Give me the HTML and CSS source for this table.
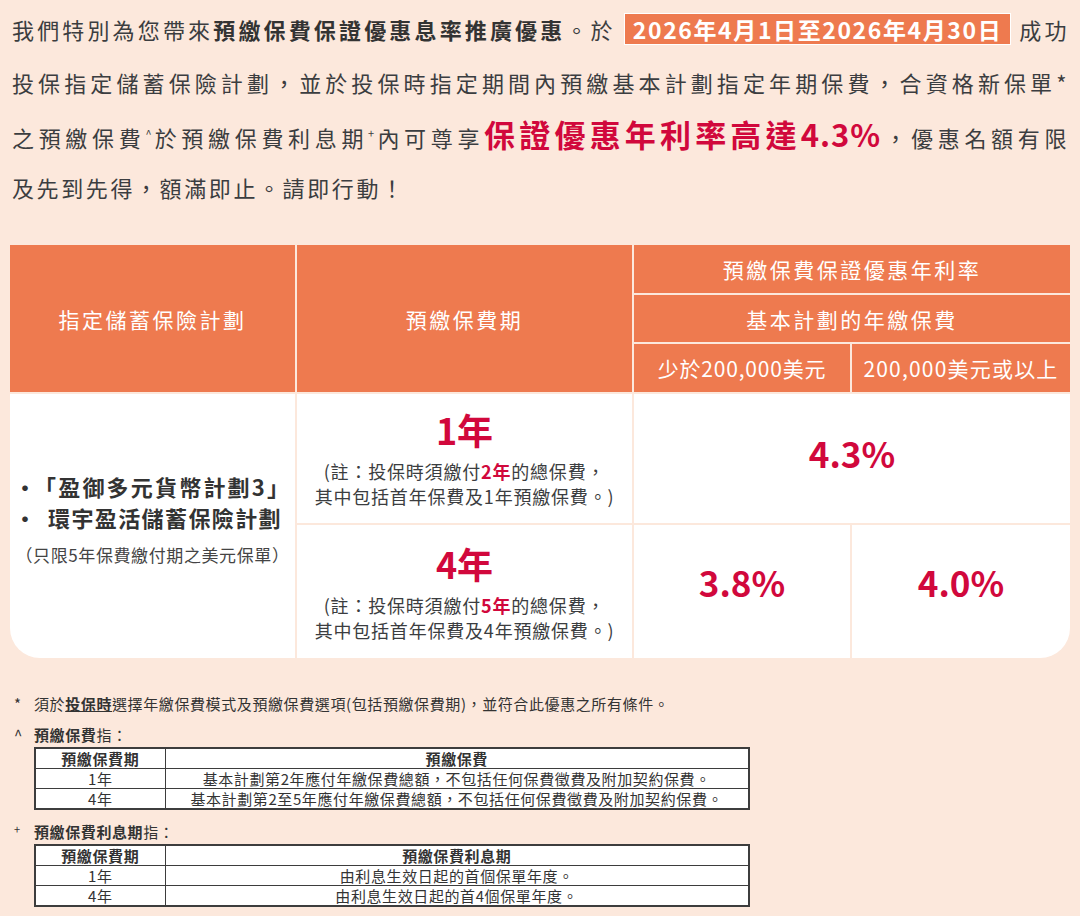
FILE: index.html
```html
<!DOCTYPE html>
<html lang="zh-Hant">
<head>
<meta charset="utf-8">
<title>預繳保費保證優惠息率推廣優惠</title>
<link rel="stylesheet" href="styles.css">
</head>
<body>
<div class="page">
  <div class="intro">
    <p class="line">我們特別為您帶來<b>預繳保費保證優惠息率推廣優惠</b>。於 <span class="date">2026年4月1日至2026年4月30日</span> 成功</p>
    <p class="line">投保指定儲蓄保險計劃，並於投保時指定期間內預繳基本計劃指定年期保費，合資格新保單*</p>
    <p class="line">之預繳保費<sup class="mark">^</sup>於預繳保費利息期<sup class="mark">+</sup>內可尊享<strong class="hl">保證優惠年利率高達4.3%</strong>，優惠名額有限</p>
    <p class="line last">及先到先得，額滿即止。請即行動！</p>
  </div>

  <div class="rate-table">
    <div class="cell head h-plan">指定儲蓄保險計劃</div>
    <div class="cell head h-period">預繳保費期</div>
    <div class="cell head h-rate">預繳保費保證優惠年利率</div>
    <div class="cell head h-prem">基本計劃的年繳保費</div>
    <div class="cell head h-low">少於200,000美元</div>
    <div class="cell head h-high">200,000美元或以上</div>

    <div class="cell body b-plan">
      <ul class="plans">
        <li><span class="dot">•</span><span class="p1">「盈御多元貨幣計劃3」</span></li>
        <li><span class="dot">•</span><span class="p2">環宇盈活儲蓄保險計劃</span></li>
      </ul>
      <p class="limit">（只限5年保費繳付期之美元保單）</p>
    </div>
    <div class="cell body b-1y">
      <div class="period">1年</div>
      <p class="pnote">(註：投保時須繳付<b>2年</b>的總保費，<br>其中包括首年保費及1年預繳保費。)</p>
    </div>
    <div class="cell body b-43"><span class="rate">4.3%</span></div>
    <div class="cell body b-4y">
      <div class="period">4年</div>
      <p class="pnote">(註：投保時須繳付<b>5年</b>的總保費，<br>其中包括首年保費及4年預繳保費。)</p>
    </div>
    <div class="cell body b-38"><span class="rate">3.8%</span></div>
    <div class="cell body b-40"><span class="rate">4.0%</span></div>
  </div>

  <div class="notes">
    <div class="note n1"><span class="nmark">*</span><span>須於<b class="ul">投保時</b>選擇年繳保費模式及預繳保費選項(包括預繳保費期)，並符合此優惠之所有條件。</span></div>
    <div class="note n2"><span class="nmark">^</span><span><b>預繳保費</b>指：</span></div>
    <table class="mini">
      <tr><th class="c1">預繳保費期</th><th>預繳保費</th></tr>
      <tr><td class="c1">1年</td><td>基本計劃第2年應付年繳保費總額，不包括任何保費徵費及附加契約保費。</td></tr>
      <tr><td class="c1">4年</td><td>基本計劃第2至5年應付年繳保費總額，不包括任何保費徵費及附加契約保費。</td></tr>
    </table>
    <div class="note n3"><span class="nmark small">+</span><span><b>預繳保費利息期</b>指：</span></div>
    <table class="mini">
      <tr><th class="c1">預繳保費期</th><th>預繳保費利息期</th></tr>
      <tr><td class="c1">1年</td><td>由利息生效日起的首個保單年度。</td></tr>
      <tr><td class="c1">4年</td><td>由利息生效日起的首4個保單年度。</td></tr>
    </table>
  </div>
</div>
</body>
</html>
```

FILE: styles.css
```css
* { box-sizing: border-box; }
html, body {
  margin: 0;
  padding: 0;
  background: #fce8dc;
}
body {
  font-family: "Noto Sans CJK TC", "Noto Sans", sans-serif;
  color: #3b3d40;
}
.page {
  width: 1080px;
  padding: 3px 12px 0 12px;
}
.intro { margin: 0; }
.line {
  margin: 0;
  font-size: 22px;
  line-height: 52.5px;
  height: 52.5px;
  letter-spacing: 1.5px;
  text-align: justify;
  text-align-last: justify;
  white-space: nowrap;
}
.line.last { text-align: left; text-align-last: left; letter-spacing: 2.6px; }
.line b { font-weight: 700; color: #333; }
.date {
  display: inline-block;
  background: #ee7a4f;
  color: #fff;
  border: 1px solid #fff;
  font-weight: 700;
  font-size: 23px;
  line-height: 30px;
  padding: 0 8px;
  letter-spacing: 1.6px;
}
.mark {
  font-size: 11px;
  vertical-align: 9px;
  line-height: 0;
  letter-spacing: 0;
}
.hl {
  color: #d1083c;
  font-size: 31px;
  font-weight: 700;
  letter-spacing: 1px;
}

.rate-table {
  margin: 32px -2px 0 -2px;
  display: grid;
  grid-template-columns: 285px 335px 216px 218px;
  grid-template-rows: 48px 47px 48px 129px 133px;
  gap: 2px;
}
.cell {
  display: flex;
  align-items: center;
  justify-content: center;
  text-align: center;
}
.head {
  background: #ee7a4f;
  color: #fff;
  font-size: 21px;
  letter-spacing: 2.5px;
}
.body { background: #fff; flex-direction: column; }
.h-plan { grid-column: 1; grid-row: 1 / 4; }
.h-period { grid-column: 2; grid-row: 1 / 4; }
.h-rate { grid-column: 3 / 5; grid-row: 1; }
.h-prem { grid-column: 3 / 5; grid-row: 2; }
.h-low { grid-column: 3; grid-row: 3; letter-spacing: 0.8px; }
.h-high { grid-column: 4; grid-row: 3; letter-spacing: 1.2px; }
.b-plan { grid-column: 1; grid-row: 4 / 6; border-bottom-left-radius: 30px; padding-bottom: 14px; }
.b-1y { grid-column: 2; grid-row: 4; padding-bottom: 2px; }
.b-43 { grid-column: 3 / 5; grid-row: 4; padding-bottom: 12px; }
.b-4y { grid-column: 2; grid-row: 5; }
.b-38 { grid-column: 3; grid-row: 5; padding-bottom: 20px; }
.b-40 { grid-column: 4; grid-row: 5; padding-bottom: 20px; border-bottom-right-radius: 30px; }

.plans {
  list-style: none;
  margin: 0;
  padding: 0 0 0 4px;
  align-self: stretch;
  text-align: left;
}
.plans li {
  display: flex;
  align-items: center;
  font-size: 22px;
  font-weight: 700;
  line-height: 31px;
  color: #333;
}
.dot { width: 18px; flex: none; text-align: center; }
.p1 { letter-spacing: 2.2px; padding-left: 2px; }
.p2 { letter-spacing: 1.4px; padding-left: 16px; }
.limit {
  margin: 9px 0 0 0;
  font-size: 17px;
  line-height: 26px;
  letter-spacing: 0.6px;
  color: #444;
}
.period {
  color: #d1083c;
  font-weight: 700;
  font-size: 36px;
  line-height: 44px;
}
.pnote {
  margin: 8px 0 0 0;
  font-size: 18px;
  line-height: 25px;
  letter-spacing: 0.8px;
  color: #3b3d40;
}
.pnote b { color: #d1083c; font-weight: 700; }
.rate {
  color: #d1083c;
  font-weight: 700;
  font-size: 35px;
  letter-spacing: 0;
}

.notes { margin-top: 35px; color: #333; }
.note {
  display: flex;
  font-size: 15px;
  line-height: 22px;
  letter-spacing: 0.6px;
}
.nmark { width: 22px; flex: none; padding-left: 2px; }
.nmark.small { font-size: 11px; line-height: 16px; }
.note b { font-weight: 700; }
.ul { text-decoration: underline; }
.n2 { margin-top: 9px; }
.n3 { margin-top: 11px; }
.mini {
  margin: 1px 0 0 22px;
  width: 716px;
  border-collapse: collapse;
  border: 2px solid #3d3d3d;
  background: #fff;
  font-size: 15px;
}
.n3 + .mini { margin-top: 1px; }
.mini th, .mini td {
  border: 1px solid #3d3d3d;
  padding: 0;
  height: 20px;
  line-height: 19px;
  text-align: center;
  font-weight: 400;
  letter-spacing: 0.6px;
}
.mini th { font-weight: 700; }
.mini .c1 { width: 130px; }
```
